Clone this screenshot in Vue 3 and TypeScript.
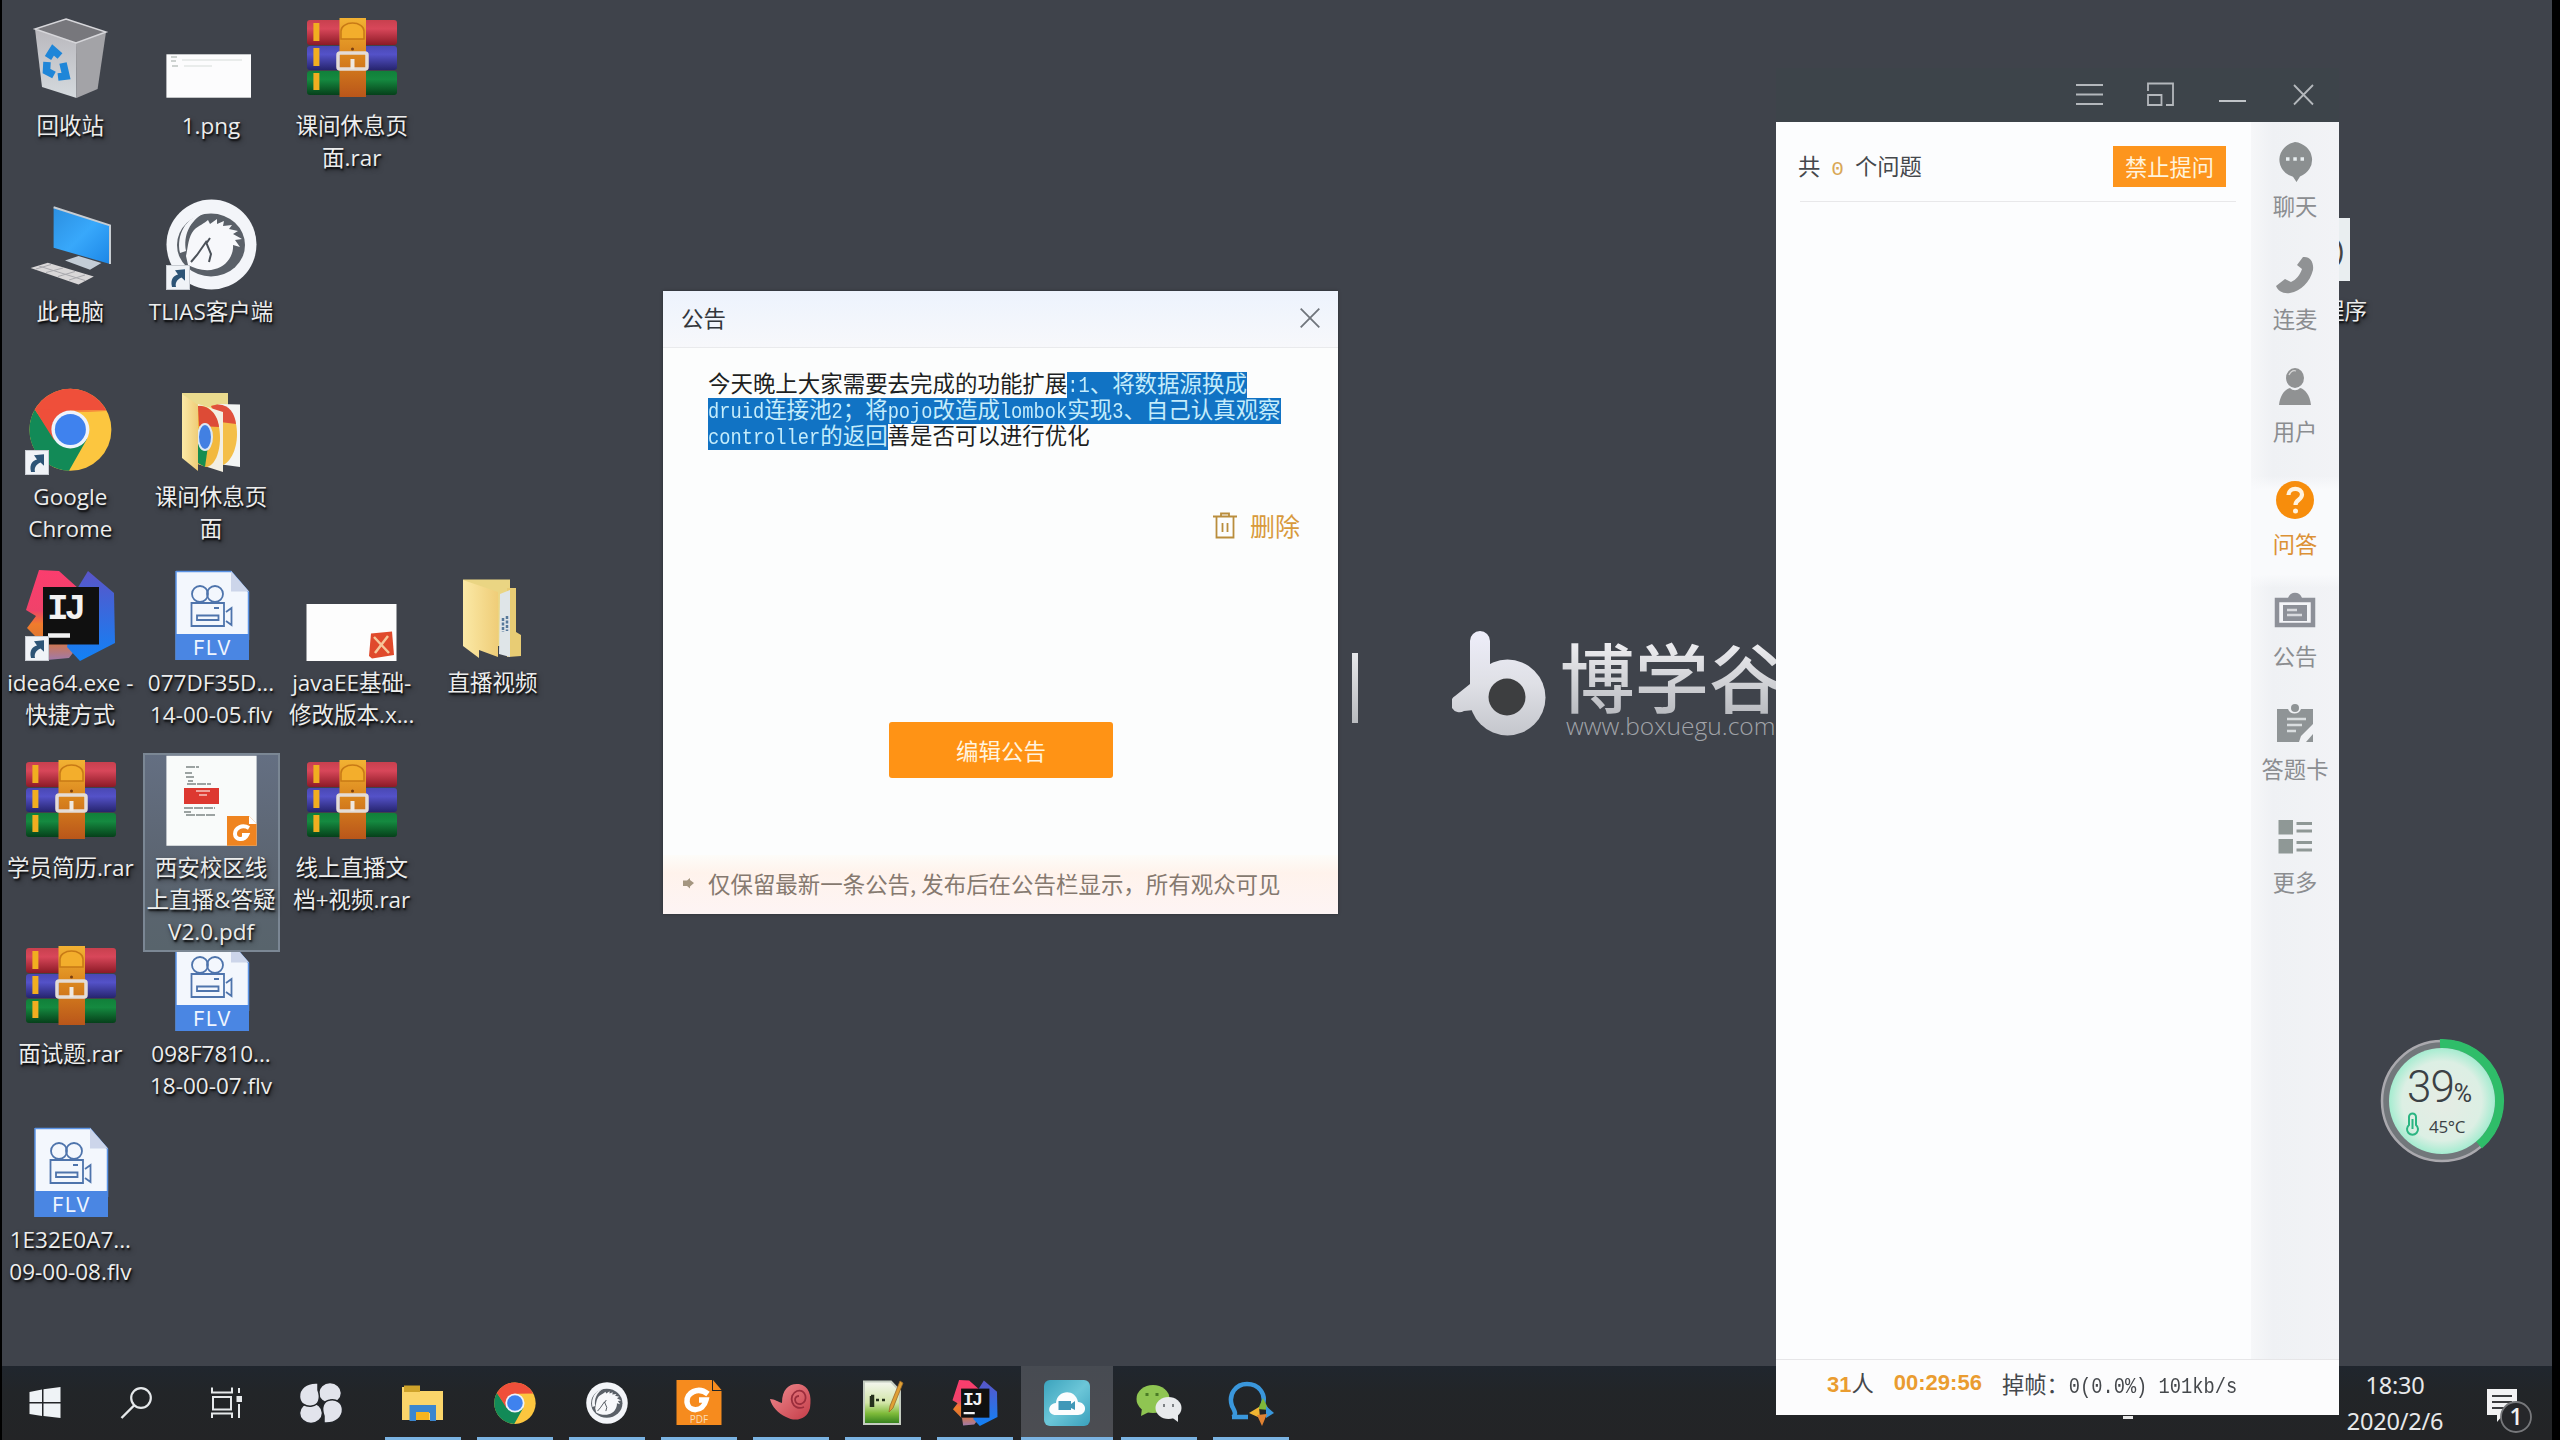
<script setup lang="ts">
interface DesktopItem {
  icon: string
  lines: string[]
  col: number
  row: number
  shortcut?: boolean
  selected?: boolean
}

const items: DesktopItem[] = [
  { icon: 'bin', lines: ['回收站'], col: 1, row: 1 },
  { icon: 'png', lines: ['1.png'], col: 2, row: 1 },
  { icon: 'rar', lines: ['课间休息页', '面.rar'], col: 3, row: 1 },
  { icon: 'pc', lines: ['此电脑'], col: 1, row: 2 },
  { icon: 'horse', lines: ['TLIAS客户端'], col: 2, row: 2, shortcut: true },
  { icon: 'chrome', lines: ['Google', 'Chrome'], col: 1, row: 3, shortcut: true },
  { icon: 'folder-chrome', lines: ['课间休息页', '面'], col: 2, row: 3 },
  { icon: 'idea', lines: ['idea64.exe -', '快捷方式'], col: 1, row: 4, shortcut: true },
  { icon: 'flv', lines: ['077DF35D...', '14-00-05.flv'], col: 2, row: 4 },
  { icon: 'xmind', lines: ['javaEE基础-', '修改版本.x...'], col: 3, row: 4 },
  { icon: 'folder', lines: ['直播视频'], col: 4, row: 4 },
  { icon: 'rar', lines: ['学员简历.rar'], col: 1, row: 5 },
  { icon: 'pdf', lines: ['西安校区线', '上直播&答疑', 'V2.0.pdf'], col: 2, row: 5, selected: true },
  { icon: 'rar', lines: ['线上直播文', '档+视频.rar'], col: 3, row: 5 },
  { icon: 'rar', lines: ['面试题.rar'], col: 1, row: 6 },
  { icon: 'flv', lines: ['098F7810...', '18-00-07.flv'], col: 2, row: 6 },
  { icon: 'flv', lines: ['1E32E0A7...', '09-00-08.flv'], col: 1, row: 7 },
]

const tabs = [
  { id: 'chat', label: '聊天' },
  { id: 'phone', label: '连麦' },
  { id: 'user', label: '用户' },
  { id: 'ask', label: '问答', active: true },
  { id: 'board', label: '公告' },
  { id: 'card', label: '答题卡' },
  { id: 'more', label: '更多' },
]

const system = ['win', 'search', 'view', 'fan']
const apps = [
  { id: 'explorer' },
  { id: 'chrome-s' },
  { id: 'horse-s' },
  { id: 'foxit' },
  { id: 'snail' },
  { id: 'npp' },
  { id: 'idea-s' },
  { id: 'cloud', active: true },
  { id: 'wechat' },
  { id: 'q' },
]
</script>

<template>
  <div class="screen">
    <svg class="defs" width="0" height="0" aria-hidden="true">
      <defs>
        <linearGradient id="gRed" x1="0" y1="0" x2="0" y2="1"><stop offset="0" stop-color="#c8404e" /><stop offset=".35" stop-color="#d8475a" /><stop offset="1" stop-color="#8c1a26" /></linearGradient>
        <linearGradient id="gBlue" x1="0" y1="0" x2="0" y2="1"><stop offset="0" stop-color="#4a48b4" /><stop offset=".35" stop-color="#5452c8" /><stop offset="1" stop-color="#26246e" /></linearGradient>
        <linearGradient id="gGreen" x1="0" y1="0" x2="0" y2="1"><stop offset="0" stop-color="#11803a" /><stop offset=".35" stop-color="#158a40" /><stop offset="1" stop-color="#06401a" /></linearGradient>
        <linearGradient id="gBelt" x1="0" y1="0" x2="0" y2="1"><stop offset="0" stop-color="#f2b233" /><stop offset=".5" stop-color="#d9831d" /><stop offset="1" stop-color="#b9561a" /></linearGradient>
        <linearGradient id="gScreen" x1="0" y1="0" x2="1" y2="1"><stop offset="0" stop-color="#2b8fe0" /><stop offset=".5" stop-color="#38a8fb" /><stop offset="1" stop-color="#1c86e6" /></linearGradient>
        <linearGradient id="gFolder" x1="0" y1="0" x2="1" y2="0"><stop offset="0" stop-color="#fbe9a6" /><stop offset="1" stop-color="#efcd78" /></linearGradient>
        <linearGradient id="gBinL" x1="0" y1="0" x2="0" y2="1"><stop offset="0" stop-color="#b9b8bd" /><stop offset="1" stop-color="#d5dade" /></linearGradient>
        <linearGradient id="gB" x1="0" y1="0" x2="0" y2="106" gradientUnits="userSpaceOnUse"><stop offset="0" stop-color="#eeeefa" /><stop offset=".5" stop-color="#dfe0e6" /><stop offset="1" stop-color="#c4c6cc" /></linearGradient>
        <linearGradient id="gPink" x1="0" y1="0" x2="0" y2="1"><stop offset="0" stop-color="#fb3d6e" /><stop offset=".45" stop-color="#f0426a" /><stop offset=".6" stop-color="#f07c2c" /><stop offset=".75" stop-color="#e0762f" /><stop offset="1" stop-color="#a07aa8" /></linearGradient>
        <linearGradient id="gIdea" x1="0" y1="0" x2="0" y2="1"><stop offset="0" stop-color="#5a55c8" /><stop offset="1" stop-color="#1182f6" /></linearGradient>
        <linearGradient id="gSnail" x1="0" y1="0" x2="1" y2="1"><stop offset="0" stop-color="#f08c90" /><stop offset="1" stop-color="#c43c48" /></linearGradient>
        <linearGradient id="gNpp" x1="0" y1="0" x2="0" y2="1"><stop offset="0" stop-color="#f4f6f0" /><stop offset=".5" stop-color="#d3e6a8" /><stop offset=".75" stop-color="#7fbb3a" /><stop offset="1" stop-color="#2f7d1c" /></linearGradient>
        <linearGradient id="gCloud" x1="0" y1="0" x2="1" y2="1"><stop offset="0" stop-color="#3ba3bd" /><stop offset=".5" stop-color="#6cc6d8" /><stop offset="1" stop-color="#3aa0bc" /></linearGradient>
        <radialGradient id="gGauge"><stop offset="0" stop-color="#e6ece4" /><stop offset=".75" stop-color="#dcefe4" /><stop offset="1" stop-color="#a5ecd0" /></radialGradient>

        <symbol id="i-bin" viewBox="0 0 91 91">
          <path d="M10 16 51 30 51.5 85 17 74Z" fill="url(#gBinL)" />
          <path d="M51 30 81 19 72.6 76 51.5 85Z" fill="#a3a3a7" />
          <path d="M41 6 81 19 51 30 10 16Z" fill="#77777c" stroke="#d6d6da" stroke-width="1.5" />
          <g fill="none" stroke="#1f86d8" stroke-width="7.5"><path d="M23 45 28 37 35 43" /><path d="M22 49 21.500 58 29 62" /><path d="M33 64 41 63 38 50" /></g>
        </symbol>
        <symbol id="i-png" viewBox="0 0 91 91">
          <rect x=".4" y="41.3" width="84.6" height="43.4" fill="#fcfcfd" />
          <path d="M5 44h6M5 48h5M6 53h6" stroke="#cdd2d0" stroke-width="2" />
          <path d="M16 47h60M18 53h28" stroke="#e2e6e5" stroke-width="1.5" />
        </symbol>
        <symbol id="i-rar" viewBox="0 0 91 91">
          <rect x="1" y="7" width="90" height="25" rx="3" fill="url(#gRed)" />
          <rect x="1" y="33" width="90" height="24" rx="3" fill="url(#gBlue)" />
          <rect x="1" y="58" width="90" height="24" rx="3" fill="url(#gGreen)" />
          <path d="M7.4 10h6v18h-6zM7.4 35h6v18h-6zM7.4 60h6v17h-6z" fill="#f1ae20" />
          <rect x="33.5" y="5" width="26.5" height="79" fill="url(#gBelt)" />
          <path d="M35 26V18a11.5 8 0 0 1 23 0v8z" fill="#f3ae2c" stroke="#c87a16" stroke-width="1.5" />
          <circle cx="46.5" cy="36" r="1.5" fill="#7a3e10" />
          <rect x="32" y="40" width="29" height="16" rx="2" fill="none" stroke="#e4dcd6" stroke-width="3.5" />
          <path d="M46.5 46v10" stroke="#efe8e0" stroke-width="4" />
        </symbol>
        <symbol id="i-pc" viewBox="0 0 91 91">
          <path d="M28.6 8.7 85 26.4V65L28.6 48.7Z" fill="url(#gScreen)" />
          <path d="M28.6 8.2 85 26.4V65" fill="none" stroke="#c8cdd2" stroke-width="2" />
          <path d="M40 61.4 53.5 57 76.4 64 65 70.7Z" fill="#c3ccd6" />
          <path d="M5.6 69 22.8 63.7 68.8 77.4 53.5 85.4Z" fill="#d9d7d8" />
          <path d="M11 70 26 65.500M21 73.500 38 69M33 77.500 50 72.500M44 81 60 76M14 67l46 14.500" stroke="#a9a9ae" stroke-width="1" />
        </symbol>
        <symbol id="i-horse" viewBox="0 0 91 91">
          <circle cx="45.5" cy="45.500" r="45" fill="#f3f5f9" />
          <ellipse cx="45" cy="46" rx="34" ry="31.500" fill="#5a6068" />
          <path d="M14 54C10 36 20 18 38 14 24 22 17 36 20 52Z" fill="#f3f5f9" />
          <path d="M20 57C22 48 22 38 28 31 33 26 38 25 42 21L44 25 51 20V25L58 22 57 27 66 26 63 30 72 32 67 35 76 40 69 41 74 48 67 46C68 56 60 68 49 70 40 73 30 70 22 66Z" fill="#f7f8fb" />
          <path d="M25 63 31 56 40 43 45 55 43 63M40 45 44 39" fill="none" stroke="#4b5159" stroke-width="2" />
        </symbol>
        <symbol id="i-chrome" viewBox="0 0 91 91">
          <circle cx="45.400" cy="45.800" r="41" fill="#fcc63f" />
          <path d="M45.400 45.800 9.500 26A41 41 0 0 1 81.500 26.500H45Z" fill="#ef4f3a" />
          <path d="M9.800 25.500A41 41 0 0 0 44 86.800L62 55 45.400 45.800 30 55Z" fill="#128a57" />
          <path d="M9.800 25.500 29 56 45 27.500H81" fill="#ef4f3a" />
          <circle cx="45.400" cy="45.500" r="19" fill="#eef3fb" />
          <circle cx="45.400" cy="45.500" r="15.500" fill="#3f82ee" />
        </symbol>
        <symbol id="i-folder-chrome" viewBox="0 0 91 91">
          <path d="M16 9h46v60H16z" fill="#eadb8e" />
          <path d="M52 20 74 20.500V83L52 80Z" fill="#f3f5f4" />
          <path d="M45 22C62 16 71 32 71 50 71 66 64 80 54 82Z" fill="#f4bf48" />
          <path d="M45 22C60 16 69 28 70 40L54 38Z" fill="#e0503c" />
          <path d="M32 20 57 28V88L32 80Z" fill="#f3efe2" />
          <path d="M32 22C46 20 54 36 54 54 54 68 49 82 40 83L32 80Z" fill="#f2b93e" />
          <path d="M32 22C44 21 52 32 53 43L33 42Z" fill="#dd4b36" />
          <path d="M32 52 42 62 39 83 32 79Z" fill="#178d50" />
          <ellipse cx="39" cy="53" rx="7" ry="13" fill="#4280e2" stroke="#dce8f4" stroke-width="2" />
          <path d="M16 10 32 21V87L16 74Z" fill="url(#gFolder)" />
        </symbol>
        <symbol id="i-folder" viewBox="0 0 91 91">
          <path d="M16 9.500H63V76H16z" fill="#ead583" />
          <path d="M60 18h9v44l5 3v21l-14 1z" fill="#e8cc74" />
          <path d="M53 24 63 20V87L52 84Z" fill="#dfe5e8" />
          <path d="M56 48v14M60 46v15" stroke="#57799a" stroke-width="2.500" stroke-dasharray="3 1.500" />
          <path d="M16 10 51 22V87L32 80 32 88 16 76Z" fill="url(#gFolder)" />
        </symbol>
        <symbol id="i-idea" viewBox="0 0 91 91">
          <path d="M14 0 34 1 54 19V75L44 88 22 90 20 76 2 58 11 46 1 40Z" fill="url(#gPink)" />
          <path d="M63 1 89 23 90 73 55 91 42 77 52 19Z" fill="url(#gIdea)" />
          <rect x="18" y="17" width="56" height="57.500" fill="#101010" />
          <text x="22" y="49" font-family="Liberation Mono, monospace" font-weight="700" font-size="36" letter-spacing="-4" fill="#f2f2f2">IJ</text>
          <path d="M23 65.500h22" stroke="#f2f2f2" stroke-width="4.500" />
        </symbol>
        <symbol id="i-flv" viewBox="0 0 91 91">
          <path d="M10 1H65L83 22V90H10Z" fill="#f3f7fd" />
          <path d="M10 1V90M10 1.500H65L82.500 22V70" fill="none" stroke="#5b94e6" stroke-width="1.500" />
          <path d="M65 1V21.500H83Z" fill="#ccd5ea" />
          <path d="M10 64H83V90H10Z" fill="#4a86e3" />
          <g fill="none" stroke="#4e74ac" stroke-width="1.800">
            <circle cx="34" cy="24" r="8" /><circle cx="49" cy="24" r="8" />
            <path d="M25.500 33H58V56H25.500ZM31 45.500H52.500V50H31ZM60 42 65.500 38V55L60 51M48 38h5" />
          </g>
          <text x="46.500" y="84.500" text-anchor="middle" font-family="Inter, sans-serif" font-size="20" letter-spacing="1" fill="#eef5ff">FLV</text>
        </symbol>
        <symbol id="i-xmind" viewBox="0 0 91 91">
          <path d="M.5 34H90.500V91H.5z" fill="#fdfdfd" />
          <path d="M65 63.500 86 61.500 88 85 66 88.500 63 86Z" fill="#e04a2c" />
          <path d="M68 67 83 83M82 66 69 83" stroke="#f6c79a" stroke-width="2.500" />
        </symbol>
        <symbol id="i-pdf" viewBox="0 0 91 91">
          <path d="M.4.700H90.600V90.700H.4z" fill="#f9fbfa" />
          <path d="M20 12h13M19 18h7M20 22h8M22 26h5M21 29h24M18 53h31M18 57h7M20 60h30" stroke="#7d8785" stroke-width="1.500" stroke-dasharray="9 1" />
          <path d="M18 33h35v16H18z" fill="#dd3830" /><path d="M30 36h14M33 40h8" stroke="#f0a09a" stroke-width="2" />
          <path d="M61 61H83L90.600 69V90.700H61Z" fill="#ef8420" /><path d="M83 61v8h7.600z" fill="#fff" />
          <path d="M83 73C76 69 69 73 69 79 69 85 78 86 81 80H76" fill="none" stroke="#fff" stroke-width="4" />
        </symbol>
        <symbol id="i-link" viewBox="0 0 24 24">
          <path d="M.500.500h23v23H.500z" fill="#f0f3f7" stroke="#c8ccd2" />
          <path d="M6 21C4 13 8 10 12 9L9 5 19 4V15L15.500 12C11 14 9 17 10 21Z" fill="#2d5476" />
        </symbol>

        <symbol id="s-chat" viewBox="0 0 44 44"><path d="M22 2A19.500 18 0 0 1 27 36.500L23.500 42 20 36.800A19.500 18 0 0 1 22 2Z" fill="#8b8f90" /><path d="M13 19h3.500M20.300 19h3.500M27.500 19h3.500" stroke="#e8eef0" stroke-width="3.500" /></symbol>
        <symbol id="s-phone" viewBox="0 0 44 44"><path d="M30 4C37 3 41 9 40 17 37 29 28 38 17 40 10 41 5 38 3 33L12 26 18 29C23 27 27 22 29 16L24 12Z" fill="#909294" /></symbol>
        <symbol id="s-user" viewBox="0 0 44 44"><ellipse cx="22" cy="13" rx="9" ry="10" fill="#909293" /><path d="M6 40C7 30 12 24 17 23 20 26 24 26 27 23 32 24 37 30 38 40Z" fill="#909293" /><path d="M16 10C18 6 20 5 23 6" stroke="#d8d8d8" stroke-width="1.300" fill="none" /></symbol>
        <symbol id="s-ask" viewBox="0 0 44 44"><circle cx="22" cy="22" r="19" fill="#f78d0c" /><path d="M15.500 17C15.500 9 29 9 29 16.500 29 22 22.500 21.500 22.500 27" fill="none" stroke="#fff3df" stroke-width="4.200" /><circle cx="22.500" cy="33" r="2.500" fill="#fff3df" /></symbol>
        <symbol id="s-board" viewBox="0 0 44 44"><path d="M4 10H40V35H4Z" fill="#f4f5f8" stroke="#8d9098" stroke-width="4.500" /><path d="M15 8C17 1 27 1 29 8Z" fill="#8d9098" /><path d="M10 15H34V31H10z" fill="#8d9098" /><path d="M14 20h10M14 25h15" stroke="#d9dade" stroke-width="2.500" /></symbol>
        <symbol id="s-card" viewBox="0 0 44 44"><path d="M4 6H15C17 12 26 12 28 6H40V21L28 33 26 39H4Z" fill="#8f9496" /><path d="M33 39 40 31V39Z" fill="#8f9496" /><circle cx="22" cy="5" r="4" fill="#8f9496" /><path d="M14 16h19M14 22h15M14 28h9" stroke="#d9dddf" stroke-width="2.500" /></symbol>
        <symbol id="s-more" viewBox="0 0 44 44"><path d="M5.500 4H20V18.500H5.500zM5.500 23H20V37.500H5.500z" fill="#8f9896" /><path d="M23.500 7.500H39M23.500 15H39M23.500 26.500H39M23.500 34H39" stroke="#8f9896" stroke-width="3.200" /></symbol>

        <symbol id="t-win" viewBox="0 0 46 46"><path d="M7.500 12 20 9.500V22H7.500zM21.500 9.200 38.500 7V22H21.500zM7.500 23.500H20V36L7.500 34zM21.500 23.500H38.500V38L21.500 36z" fill="#eff3f6" /></symbol>
        <symbol id="t-search" viewBox="0 0 46 46"><circle cx="28" cy="18" r="9.800" fill="none" stroke="#e6e9eb" stroke-width="2.200" /><path d="M21.500 25 8.500 38" stroke="#e6e9eb" stroke-width="2.400" /></symbol>
        <symbol id="t-view" viewBox="0 0 46 46"><g fill="none" stroke="#e6e9eb" stroke-width="2"><path d="M9 7.500V12.500H29V7.500M9 38V33.500H29V38M10 17H28V29.500H10ZM36 8V13M36 24V38" /></g><path d="M33.500 16h5.500v6h-5.500z" fill="#e6e9eb" /></symbol>
        <symbol id="t-fan" viewBox="0 0 46 46">
          <g fill="#e2e4ec" stroke="#23262a" stroke-width="1.500">
            <ellipse cx="32" cy="13" rx="11.500" ry="10.500" /><ellipse cx="13" cy="33" rx="11.500" ry="10.500" />
            <path d="M20 3C8 2 1 9 1.500 17 2 24 8 27 14 26 21 25 23 18 20 10Z" />
            <path d="M26 43C38 44 45 37 44.500 29 44 22 38 19 32 20 25 21 23 28 26 36Z" />
          </g>
        </symbol>
        <symbol id="t-explorer" viewBox="0 0 46 46"><path d="M2 7H20V11H43V40H2Z" fill="#fbd56a" /><path d="M4 5.500H20V12H4z" fill="#cfa32a" /><path d="M9.500 25H36V41H30V33H16V41H9.500z" fill="#3b86cf" /><path d="M16 32H29V40H16z" fill="#f5b41f" /></symbol>
        <symbol id="t-foxit" viewBox="0 0 46 46"><path d="M.500 0H36V11H45.500V45H.500z" fill="#f68b1e" /><path d="M37 0V10H45.500z" fill="#f68b1e" /><path d="M32 14C22 6 10 13 11 22 12 32 27 33 30 20H23" fill="none" stroke="#fff" stroke-width="5.500" /><text x="23" y="43" text-anchor="middle" font-family="Open Sans, sans-serif" font-size="10" fill="#fbdcb8">PDF</text></symbol>
        <symbol id="t-snail" viewBox="0 0 46 46"><path d="M2 19C7 19 10 22 14 23 14 8 22 3 31 4 41 6 44 15 42 28 39 40 27 42 18 37 10 33 4 27 2 19Z" fill="url(#gSnail)" /><path d="M36 27C24 32 19 15 29 11 38 8 41 22 33 24 26 25 25 16 31 16" fill="none" stroke="#9b2d3c" stroke-width="1.800" /></symbol>
        <symbol id="t-npp" viewBox="0 0 46 46"><path d="M4 1.500H31L40 11V44H4Z" fill="url(#gNpp)" stroke="#c4ccc0" stroke-width="2" /><path d="M11 27V16M11 16h2V27M16 20h3M22 20h3" stroke="#26301c" stroke-width="2.500" /><path d="M43 3 33 28 29 32 30 26 40 1Z" fill="#e0a034" stroke="#9c6a28" stroke-width=".8" /></symbol>
        <symbol id="t-cloud" viewBox="0 0 46 46"><rect width="46" height="46" rx="6" fill="url(#gCloud)" /><path d="M12 35C3 35 3 24 12 23 13 10 31 8 34 22 44 23 43 35 34 35Z" fill="#fbfdfe" /><path d="M14.500 21H27V24L31 21V30L27 28V30H14.500z" fill="#4098b8" /></symbol>
        <symbol id="t-wechat" viewBox="0 0 46 46"><ellipse cx="17" cy="19" rx="16.500" ry="14" fill="#8fc552" /><path d="M6 28 5 36 13 32z" fill="#8fc552" /><path d="M11 13v3M21 13v3" stroke="#4b7c26" stroke-width="3" /><ellipse cx="32.500" cy="28" rx="13" ry="11" fill="#e8eaec" /><path d="M34 36 42 42V34z" fill="#e8eaec" /><path d="M28 24v3M37 24v3" stroke="#7c8084" stroke-width="2" /></symbol>
        <symbol id="t-q" viewBox="0 0 46 46"><path d="M5 37.500C9 34 6 30 4 26 0 14 8 4 19 4 31 4 38 14 35 24M4 37H20" fill="none" stroke="#3a97dc" stroke-width="4.500" /><path d="M30 29 35 18 41 30Z" fill="#7fb83a" /><path d="M31 27 21 33 32 38Z" fill="#f0b432" /><path d="M38 26 46 33 38 38Z" fill="#3a97dc" /><path d="M29 35 34 46 39 34Z" fill="#e08232" /></symbol>
      </defs>
    </svg>

    <main class="desktop">
      <div class="grid">
        <div
          v-for="(it, i) in items"
          :key="i"
          class="item"
          :class="{ selected: it.selected }"
          :style="{ gridColumn: it.col, gridRow: it.row }"
        >
          <div class="pic">
            <svg width="91" height="91"><use :href="'#i-' + it.icon" /></svg>
            <svg v-if="it.shortcut" class="link" width="24" height="25" viewBox="0 0 24 24" preserveAspectRatio="none"><use href="#i-link" /></svg>
          </div>
          <div v-for="l in it.lines" :key="l" class="line">{{ l }}</div>
        </div>
      </div>

      <div class="brand">
        <i class="bar"></i>
        <svg class="mark" width="94" height="107" viewBox="0 0 94 107">
          <path d="M18 11A10 10 0 0 1 38 11V60L22 80 12 81A8 8 0 0 1 3 66L18 54Z" fill="url(#gB)" />
          <circle cx="55.500" cy="67.500" r="38" fill="url(#gB)" />
          <circle cx="55" cy="67" r="18.500" fill="#3d3e40" />
        </svg>
        <div class="words"><span class="name">博学谷</span><span class="url">www.boxuegu.com</span></div>
      </div>

      <div class="hidden-item"><span class="sheet">)</span><span class="line">程序</span></div>

      <div class="gauge">
        <svg class="ring" width="126" height="126" viewBox="0 0 126 126">
          <circle cx="63" cy="63" r="60" fill="#72777b" stroke="#aaa9ae" stroke-width="2.500" />
          <path d="M61 5.500A57.500 57.500 0 0 1 100 107" fill="none" stroke="#2fbd69" stroke-width="9" />
          <circle cx="63" cy="63" r="53" fill="url(#gGauge)" />
          <path d="M30 87V79A3.500 3.500 0 0 1 37 79V87A5.500 5.500 0 1 1 30 87ZM33.500 81V91" fill="none" stroke="#2bb582" stroke-width="2" />
        </svg>
        <div class="load"><b>39</b><small>%</small></div>
        <div class="temp">45°C</div>
      </div>
    </main>

    <footer class="taskbar">
      <div class="sys">
        <span v-for="s in system" :key="s" :class="s"><svg width="46" height="46"><use :href="'#t-' + s" /></svg></span>
      </div>
      <div class="apps">
        <span v-for="a in apps" :key="a.id" class="app" :class="{ active: a.active }">
          <svg v-if="a.id === 'chrome-s'" width="46" height="46"><use href="#i-chrome" /></svg>
          <svg v-else-if="a.id === 'horse-s'" width="42" height="42"><use href="#i-horse" /></svg>
          <svg v-else-if="a.id === 'idea-s'" width="46" height="46"><use href="#i-idea" /></svg>
          <svg v-else width="46" height="46"><use :href="'#t-' + a.id" /></svg>
        </span>
      </div>
      <div class="clock"><span>18:30</span><span>2020/2/6</span></div>
      <svg class="note" width="52" height="50" viewBox="0 0 52 50">
        <path d="M4 3H34V29H20L14 36V29H4Z" fill="#f2f2f3" />
        <path d="M9 10H29M9 16H29M9 22H24" stroke="#3a3b3d" stroke-width="2" />
        <circle cx="33" cy="31" r="15" fill="#26272a" stroke="#77787b" stroke-width="1.800" />
        <text x="33" y="39" text-anchor="middle" font-family="Open Sans, sans-serif" font-size="23" font-weight="600" fill="#f1f1f1">1</text>
      </svg>
    </footer>

    <section class="dialog">
      <header>
        <span>公告</span>
        <svg width="20" height="20" viewBox="0 0 20 20"><path d="M.7.700 19.300 19.300M19.300.700.700 19.300" stroke="#70757c" stroke-width="1.800" /></svg>
      </header>
      <div class="notice">
        <p>今天晚上大家需要去完成的功能扩展<mark><i>:1</i>、将数据源换成</mark></p>
        <p><mark><i>druid</i>连接池<i>2</i>；将<i>pojo</i>改造成<i>lombok</i>实现<i>3</i>、自己认真观察</mark></p>
        <p><mark><i>controller</i>的返回</mark>善是否可以进行优化</p>
      </div>
      <div class="delete">
        <svg width="26" height="27" viewBox="0 0 26 27"><path d="M1 4.500H25M9 4V1.500H17V4M4.500 5V25.500H21.500V5M10.500 11V20M15.500 11V20" fill="none" stroke="#b98d3c" stroke-width="1.800" /></svg>
        <span>删除</span>
      </div>
      <button class="edit">编辑公告</button>
      <div class="hint">
        <svg width="13" height="14" viewBox="0 0 13 14"><path d="M1 4.500H5L8 2V4L12 7 8 10.500V12.500L5 10H1Z" fill="#a49680" /></svg>
        <span>仅保留最新一条公告<i>,</i>发布后在公告栏显示，所有观众可见</span>
      </div>
    </section>

    <section class="live">
      <div class="titlebar">
        <svg width="30" height="26" viewBox="0 0 30 26"><path d="M1 3H28M1 12.500H28M1 22H28" stroke="#b4b8bc" stroke-width="1.800" /></svg>
        <svg width="30" height="26" viewBox="0 0 30 26"><path d="M2 9V1.500H27V23H20M2 13H15.500V23H2Z" fill="none" stroke="#b4b8bc" stroke-width="1.800" /></svg>
        <svg width="30" height="26" viewBox="0 0 30 26"><path d="M1 19H28" stroke="#c0c4c8" stroke-width="2" /></svg>
        <svg width="30" height="26" viewBox="0 0 30 26"><path d="M5 3 24 22.500M24 3 5 22.500" stroke="#b4b8bc" stroke-width="1.800" /></svg>
      </div>
      <div class="panel">
        <div class="main">
          <div class="head">
            <span class="count">共<em>0</em>个问题</span>
            <button>禁止提问</button>
          </div>
        </div>
        <nav>
          <div v-for="t in tabs" :key="t.id" class="tab" :class="{ on: t.active }">
            <svg width="44" height="44"><use :href="'#s-' + t.id" /></svg>
            <span>{{ t.label }}</span>
          </div>
        </nav>
        <div class="status">
          <span><b>31</b>人</span><b class="time">00:29:56</b><span class="drop">掉帧：<i>0(0.0%) 101kb/s</i></span>
        </div>
      </div>
      <i class="nub"></i>
    </section>

    <i class="edge left"></i><i class="edge right"></i>
  </div>
</template>

<style>
body { overflow: hidden; background: #000; }
</style>

<style scoped>
.screen {
  position: relative; width: 2560px; height: 1440px; overflow: hidden;
  display: flex; flex-direction: column; background: #3f434b;
  font-family: "Open Sans", "Noto Sans CJK SC", sans-serif; color: #eceded;
}
.defs { position: absolute; }
.screen i, .screen em { font-style: normal; }
svg { display: block; flex: none; }
.desktop { position: relative; height: 1366px; flex: none; }

.grid { display: grid; grid-template-columns: repeat(4, 140.7px); grid-template-rows: repeat(7, 185.6px); }
.item { position: relative; display: flex; flex-direction: column; align-items: center; padding-top: 13px; box-sizing: border-box; height: 186px; }
.pic { position: relative; width: 91px; height: 91px; margin-bottom: 6px; }
.link { position: absolute; left: 0; bottom: 0; }
.line { font-size: 22.5px; line-height: 32px; white-space: nowrap; color: #eceded; text-shadow: 1px 2px 2px rgba(0, 0, 0, .85), 2px 3px 5px rgba(0, 0, 0, .5); }
.selected { z-index: 1; }
.selected::before {
  content: ""; position: absolute; z-index: -1; left: 2px; top: 11px; width: 137px; height: 199px; box-sizing: border-box;
  background: linear-gradient(#646f82, #5b6470 60%, #58646c); border: 2px solid #7b8794;
}

.brand { position: absolute; left: 1352px; top: 630px; display: flex; }
.bar { width: 6px; height: 70px; margin-top: 23px; background: linear-gradient(#e6e7ea, #b9bbbf); }
.mark { margin-left: 94px; }
.words { display: flex; flex-direction: column; margin-left: 14px; white-space: nowrap; }
.name { font: 500 74.500px/80px "Noto Sans CJK SC", sans-serif; margin-top: 5px; background: linear-gradient(#f2f2f5, #b9bbc0); -webkit-background-clip: text; background-clip: text; color: transparent; }
.url { font: 300 24.600px/28px "Open Sans", sans-serif; margin: -3px 0 0 6px; color: #a1a3a9; }

.hidden-item { position: absolute; left: 2322px; top: 218px; display: flex; flex-direction: column; }
.sheet { width: 28px; height: 63px; line-height: 64px; box-sizing: border-box; padding-left: 13px; background: #e9eef0; color: #444; font-size: 30px; margin-bottom: 14px; }

.gauge { position: absolute; left: 2379px; top: 1038px; width: 126px; height: 126px; color: #3b4145; }
.ring { position: absolute; inset: 0; }
.load { position: relative; padding: 26px 0 0 28px; line-height: 46px; white-space: nowrap; font-family: Roboto, sans-serif; }
.load b { font-weight: 300; font-size: 44px; letter-spacing: -1px; }
.load small { font-size: 25px; font-weight: 400; }
.temp { position: relative; padding-left: 50px; margin-top: -3px; font: 500 17px/20px "Open Sans", sans-serif; letter-spacing: -.3px; }

.taskbar { height: 74px; display: flex; background: linear-gradient(#20262e, #222528 35%, #232426); }
.sys { display: flex; width: 377px; }
.sys span { display: flex; align-items: center; justify-content: center; width: 90.500px; }
.sys .fan { width: 98px; }
.apps { display: flex; width: 920px; }
.app { position: relative; width: 92px; display: flex; justify-content: center; align-items: center; }
.app::after { content: ""; position: absolute; bottom: 0; left: 8px; right: 8px; height: 3px; background: #7ab3e2; }
.active { background: linear-gradient(#474b52, #4c4d52); }
.active::after { left: 0; right: 0; }
.clock { margin-left: 1033px; width: 130px; padding-top: 2px; display: flex; flex-direction: column; align-items: center; font: 23.500px/35.500px "Noto Sans", sans-serif; letter-spacing: -.2px; color: #e8e9ea; }
.note { margin: 20px 0 0 23px; }

.dialog {
  position: absolute; left: 663px; top: 291px; width: 675px; height: 623px; background: #fcfdfd;
  display: flex; flex-direction: column; box-shadow: 0 0 3px rgba(0, 0, 0, .35);
  font: 22.460px/26px "Noto Sans CJK SC", sans-serif; color: #1d1f22;
}
.dialog header { height: 57px; box-sizing: border-box; display: flex; justify-content: space-between; align-items: center; padding: 0 18px 3px 18px; background: linear-gradient(#edf3fd, #f7f8fb); border-bottom: 1px solid #e9eaec; color: #33363b; }
.dialog header span { margin-top: -2px; }
.notice { padding: 24px 0 0 45px; height: 78px; line-height: 21px; }
.notice p { margin: 0; height: 26px; white-space: nowrap; display: flex; }
.notice mark { display: block; height: 26px; background: #1173c4; color: #c4ecfb; }
.notice i, .status i { display: inline-block; line-height: 18px; font-family: "Liberation Mono", monospace; font-size: 18.720px; transform: scaleY(1.14); transform-origin: 50% 80%; }
.delete { display: flex; align-items: center; align-self: flex-end; gap: 12px; margin: 58px 38px 0 0; height: 34px; font-size: 25px; color: #d89a3c; }
.edit { display: block; margin: 180px auto 0 226px; width: 224px; height: 56px; padding: 0; border: 0; border-radius: 3px; background: #ff9315; color: #fff4df; font: inherit; line-height: 55px; }
.hint { margin-top: auto; height: 59px; box-sizing: border-box; display: flex; align-items: center; gap: 13px; padding: 0 0 4px 19px; background: linear-gradient(#fdfcf9, #fff3ec 30%, #fdf4f4); color: #85796f; white-space: nowrap; }
.hint i { display: inline-block; width: 11.200px; }

.live { position: absolute; left: 1776px; top: 68px; width: 563px; height: 1352px; }
.titlebar { height: 54px; box-sizing: border-box; display: flex; justify-content: flex-end; gap: 41.500px; padding: 14px 20px 0 0; background: #3d444a; }
.panel { height: 1293px; display: grid; grid-template: 1fr 56px / 475px 88px; background: #fcfdfe; font: 22.300px/26px "Noto Sans CJK SC", sans-serif; color: #45484c; }
.main { padding: 0 15px 0 24px; }
.head { display: flex; align-items: center; justify-content: space-between; height: 80px; border-bottom: 1px solid #e8e8ea; padding: 10px 10px 0 0; box-sizing: border-box; }
.count { margin: -1px 0 0 -2px; }
.count em { color: #d9a857; margin: 0 11px 0 11px; font-family: "Liberation Mono", monospace; font-size: 21px; line-height: 20px; }
.head button { width: 113px; height: 41px; padding: 0; border: 0; background: #fd951d; color: #fff3dc; font: inherit; line-height: 39px; }
nav { overflow: hidden; background: linear-gradient(90deg, #f6f7f9, #eff1f4 25%, #f2f3f6); padding-top: 16px; }
.tab { height: 112.600px; display: flex; flex-direction: column; align-items: center; color: #8b8d90; }
.tab svg { margin: 2px 0 8px; }
.on { color: #dc9136; background: linear-gradient(rgba(249, 250, 252, 0), #f9fafc 12%, #f9fafc 88%, rgba(249, 250, 252, 0)); }
.status { grid-column: 1 / 3; display: flex; align-items: center; padding: 0 0 9px 51px; border-top: 1px solid #e6e6e8; white-space: nowrap; background: #fcfcfd; box-sizing: border-box; }
.status i { font-size: 18.700px; white-space: pre; }
.status b { color: #ea9c30; font-family: "Liberation Sans", sans-serif; font-size: 22px; }
.status .time { margin: 0 20px 0 20px; }
.nub { position: absolute; left: 347px; top: 1348px; width: 10px; height: 3px; background: #e8e8e8; }
.edge { position: absolute; top: 0; bottom: 0; background: #000; }
.left { left: 0; width: 1.500px; }
.right { right: 0; width: 8px; }
</style>
